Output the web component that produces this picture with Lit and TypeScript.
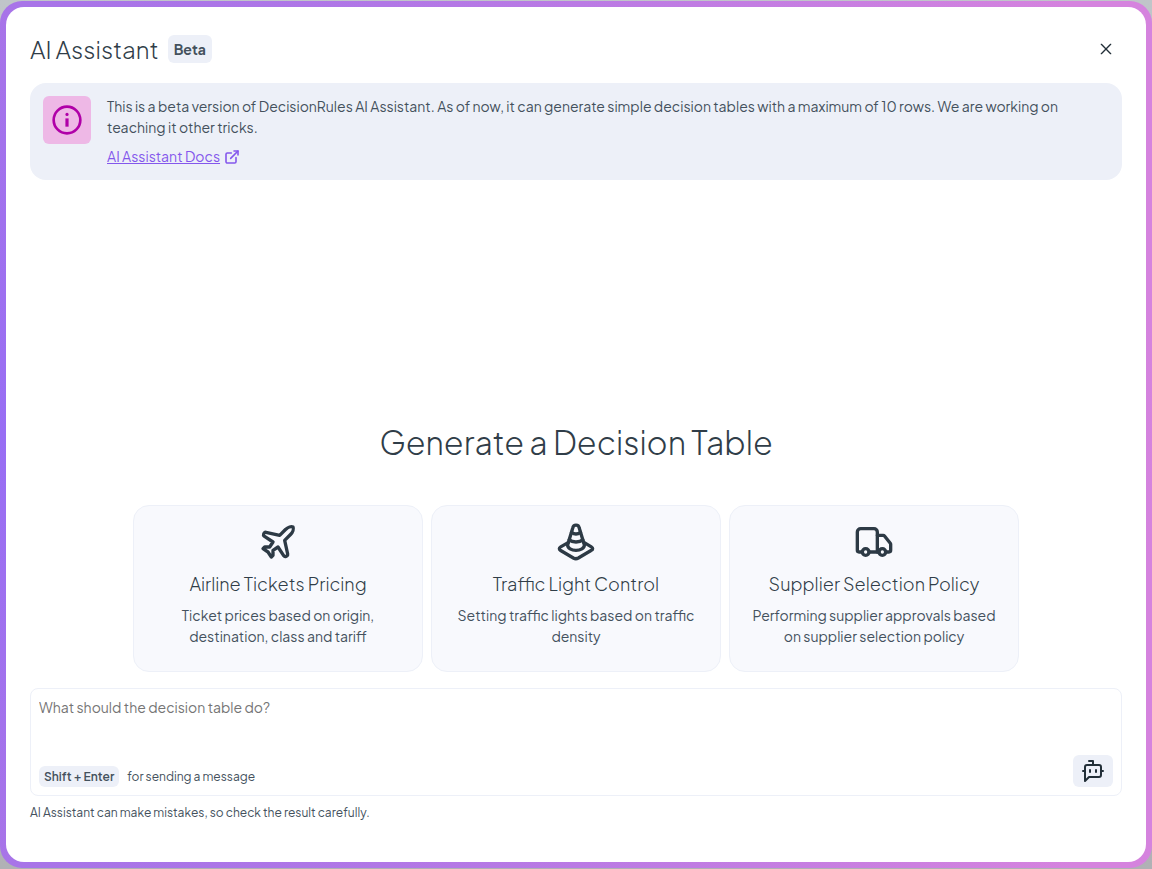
import { LitElement, html, css, svg } from "lit";
import { customElement } from "lit/decorators.js";

const icons: Record<string, unknown> = {
  plane: svg`<path d="M17.8 19.2 16 11l3.5-3.5C21 6 21.5 4 21 3c-1-.5-3 0-4.5 1.5L13 8 4.8 6.2c-.5-.1-.9.1-1.1.5l-.3.5c-.2.5-.1 1 .3 1.3L9 12l-2 3H4l-1 1 3 2 2 3 1-1v-3l3-2 3.5 5.3c.3.4.8.5 1.3.3l.5-.2c.4-.3.6-.7.5-1.2z"/>`,
  cone: svg`<path d="M9.3 6.2a4.55 4.55 0 0 0 5.4 0"/><path d="M7.9 10.7c.9.8 2.4 1.3 4.1 1.3s3.2-.5 4.1-1.3"/><path d="M13.9 3.5a1.93 1.93 0 0 0-3.8-.1l-3 10c-.1.2-.1.4-.1.6 0 1.7 2.2 3 5 3s5-1.3 5-3c0-.2 0-.4-.1-.6Z"/><path d="m7.5 12.2-4.7 2.7c-.5.3-.8.7-.8 1.1s.3.8.8 1.1l7.6 4.5c.9.5 2.1.5 3 0l7.6-4.5c.7-.3 1-.7 1-1.1s-.3-.8-.8-1.1l-4.7-2.8"/>`,
  truck: svg`<path d="M14 18V6a2 2 0 0 0-2-2H4a2 2 0 0 0-2 2v11a1 1 0 0 0 1 1h2"/><path d="M15 18H9"/><path d="M19 18h2a1 1 0 0 0 1-1v-3.65a1 1 0 0 0-.22-.62l-3.48-4.35A1 1 0 0 0 17.52 8H14"/><circle cx="7" cy="18" r="2"/><circle cx="17" cy="18" r="2"/>`,
  bot: svg`<path d="M12 6V2H8"/><path d="m8 18-4 4V8a2 2 0 0 1 2-2h12a2 2 0 0 1 2 2v8a2 2 0 0 1-2 2Z"/><path d="M2 12h2"/><path d="M9 11v2"/><path d="M15 11v2"/><path d="M20 12h2"/>`,
  external: svg`<path d="M15 3h6v6"/><path d="M10 14 21 3"/><path d="M18 13v6a2 2 0 0 1-2 2H5a2 2 0 0 1-2-2V8a2 2 0 0 1 2-2h6"/>`,
  info: svg`<circle cx="12" cy="12" r="10"/><path d="M12 10.8v6.2" stroke-width="2.4" stroke-linecap="butt"/><path d="M12 7.7v.1" stroke-width="2.4"/>`,
  close: svg`<path d="M5 5 19 19"/><path d="M19 5 5 19"/>`,
};

const icon = (name: string, cls: string) => html`<svg class="icon ${cls}" viewBox="0 0 24 24" aria-hidden="true">${icons[name]}</svg>`;

const suggestions = [
  { icon: "plane", title: "Airline Tickets Pricing", text: "Ticket prices based on origin, destination, class and tariff" },
  { icon: "cone", title: "Traffic Light Control", text: "Setting traffic lights based on traffic density" },
  { icon: "truck", title: "Supplier Selection Policy", text: "Performing supplier approvals based on supplier selection policy" },
];

@customElement("app-root")
export class AppRoot extends LitElement {
  static styles = css`
    :host {
      box-sizing: border-box;
      min-height: 100vh;
      padding: 1px 0;
      display: flex;
      background: linear-gradient(#c0c5c9, #b0b1b5);
      font-family: "Plus Jakarta Sans", Inter, sans-serif;
      font-size: 14px;
      line-height: 21px;
      color: #44515d;
    }
    * { box-sizing: border-box; }
    h1, h2, h3, p { margin: 0; }
    h1, h2, h3 { font-weight: 300; color: #303d48; }
    button, textarea { font: inherit; color: inherit; }
    .icon {
      display: block;
      flex: none;
      width: 24px;
      height: 24px;
      fill: none;
      stroke: currentColor;
      stroke-width: 2;
      stroke-linecap: round;
      stroke-linejoin: round;
    }
    .frame {
      flex: 1;
      display: flex;
      padding: 6px;
      border-radius: 22px;
      background: radial-gradient(circle at left center, #986ef4, #a874e8 35%, #d583de 94%);
    }
    .dialog {
      flex: 1;
      display: flex;
      flex-direction: column;
      padding: 24px 24px 40px;
      border-radius: 18px;
      background: #fff;
    }
    .header { display: flex; align-items: center; gap: 9px; height: 36px; }
    .header h1 { font-size: 24px; line-height: 36px; }
    .badge {
      padding: 4px 6px;
      border-radius: 6px;
      background: #edf0f8;
      font-weight: 700;
      line-height: 20px;
    }
    .close {
      display: grid;
      place-items: center;
      width: 32px;
      height: 32px;
      margin-left: auto;
      padding: 0;
      border: 0;
      background: none;
      color: #222f38;
    }
    .small { width: 16px; height: 16px; }
    .notice {
      display: flex;
      align-items: flex-start;
      gap: 16px;
      margin-top: 16px;
      padding: 13px;
      border-radius: 16px;
      background: #edf0f8;
    }
    .tile {
      display: grid;
      place-items: center;
      flex: none;
      width: 48px;
      height: 48px;
      border-radius: 6px;
      background: #eeb8e6;
      color: #b000a8;
    }
    .medium { width: 32px; height: 32px; }
    .docs {
      display: inline-flex;
      align-items: center;
      gap: 4px;
      margin-top: 8px;
      color: #8457ec;
    }
    .docs .icon { stroke-width: 2.4; }
    .body {
      flex: 1;
      display: flex;
      flex-direction: column;
      justify-content: flex-end;
      align-items: center;
    }
    .body h2 { font-size: 32px; line-height: 48px; text-align: center; }
    .cards {
      display: grid;
      grid-template-columns: repeat(3, minmax(0, 290px));
      gap: 8px;
      margin: 39px 0 16px;
    }
    .card {
      display: flex;
      flex-direction: column;
      align-items: center;
      padding: 16px 16px 24px;
      border: 1px solid #edf0f8;
      border-radius: 16px;
      background: #f8f9fd;
      text-align: center;
    }
    .large { width: 40px; height: 40px; color: #2d3a45; }
    .card h3 { margin: 8px 0; font-size: 18px; line-height: 27px; }
    .composer {
      display: grid;
      gap: 8px;
      padding: 8px;
      border: 1px solid #edf0f8;
      border-radius: 8px;
    }
    textarea {
      display: block;
      width: 100%;
      height: 50px;
      padding: 0;
      border: 0;
      outline: 0;
      resize: none;
      background: none;
    }
    textarea::placeholder { color: #757575; opacity: 1; }
    .actions { display: flex; align-items: flex-end; gap: 8px; font-size: 12px; }
    kbd {
      padding: 0 5px;
      border-radius: 6px;
      background: #edf0f8;
      font-family: inherit;
      font-weight: 600;
    }
    .send {
      display: grid;
      place-items: center;
      width: 40px;
      height: 32px;
      margin-left: auto;
      padding: 0;
      border: 0;
      border-radius: 6px;
      background: #edf0f8;
      color: #222f38;
    }
    .note { margin-top: 8px; font-size: 12px; line-height: 18px; }
  `;

  render() {
    return html`
      <div class="frame">
        <main class="dialog">
          <header class="header">
            <h1>AI Assistant</h1>
            <span class="badge">Beta</span>
            <button class="close" aria-label="Close">${icon("close", "small")}</button>
          </header>
          <section class="notice">
            <div class="tile">${icon("info", "medium")}</div>
            <div>
              <p>This is a beta version of DecisionRules AI Assistant. As of now, it can generate simple decision tables with a maximum of 10 rows. We are working on teaching it other tricks.</p>
              <a class="docs" href="#docs">AI Assistant Docs ${icon("external", "small")}</a>
            </div>
          </section>
          <section class="body">
            <h2>Generate a Decision Table</h2>
            <div class="cards">
              ${suggestions.map((s) => html`
                <article class="card">
                  ${icon(s.icon, "large")}
                  <h3>${s.title}</h3>
                  <p>${s.text}</p>
                </article>`)}
            </div>
          </section>
          <form class="composer" @submit=${(e: Event) => e.preventDefault()}>
            <textarea aria-label="Message" placeholder="What should the decision table do?"></textarea>
            <div class="actions">
              <kbd>Shift + Enter</kbd>
              <span>for sending a message</span>
              <button class="send" aria-label="Send">${icon("bot", "")}</button>
            </div>
          </form>
          <p class="note">AI Assistant can make mistakes, so check the result carefully.</p>
        </main>
      </div>`;
  }
}
